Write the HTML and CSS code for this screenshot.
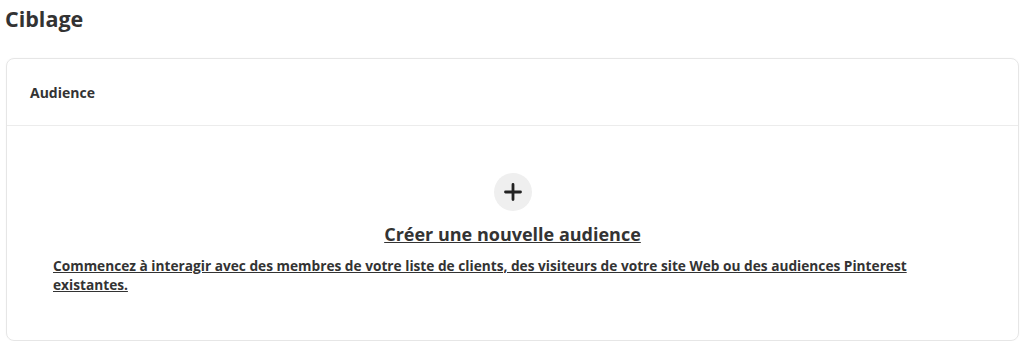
FILE: index.html
```html
<!DOCTYPE html>
<html lang="fr">
<head>
  <meta charset="UTF-8" />
  <title>Ciblage</title>
  <link rel="stylesheet" href="styles.css">
</head>
<body>

  <h1 class="page-title">Ciblage</h1>

  <!-- Audience card -->
  <div class="card">
    <div class="card-header">Audience</div>
    <div class="card-body">
      <div class="add-btn">
        <svg width="20" height="20" viewBox="0 0 20 20">
          <path d="M10 2.5v15M2.5 10h15" stroke="#222" stroke-width="2.8" stroke-linecap="round" />
        </svg>
      </div>
      <a class="create-title" href="#">Créer une nouvelle audience</a>
      <a class="create-desc" href="#">Commencez à interagir avec des membres de votre liste de clients, des visiteurs de votre site Web ou des audiences Pinterest existantes.</a>
    </div>
  </div>

</body>
</html>
```

FILE: styles.css
```css
body {
  margin: 0;
  padding: 0 5px;
  background: #fff;
  font-family: 'Open Sans', sans-serif;
  color: #333;
}

.page-title {
  font-size: 21.5px;
  font-weight: 700;
  line-height: 26px;
  margin: 6px 0 26px;
}

.card {
  margin-left: 1px;
  width: 1011px;
  border: 1px solid #e6e6e6;
  border-radius: 8px;
  box-shadow: 0 0 2px rgba(0,0,0,0.04);
}

.card-header {
  font-size: 14px;
  font-weight: 700;
  padding: 26px 23px 24px;
  line-height: 16px;
  border-bottom: 1px solid #ececec;
}

.card-body {
  display: flex;
  flex-direction: column;
  align-items: center;
  padding: 47px 46px 46px;
}

.add-btn {
  width: 38px;
  height: 38px;
  border-radius: 50%;
  background: #efefef;
  display: flex;
  align-items: center;
  justify-content: center;
}

.create-title {
  margin-top: 11px;
  font-size: 18px;
  font-weight: 700;
  line-height: 24px;
  color: #333;
}

.create-desc {
  align-self: stretch;
  margin-top: 10px;
  padding-right: 40px;
  font-size: 13.7px;
  font-weight: 700;
  line-height: 19px;
  color: #333;
}
```
